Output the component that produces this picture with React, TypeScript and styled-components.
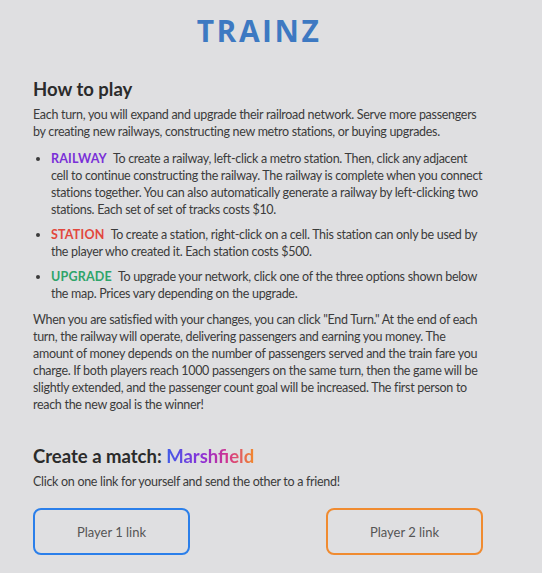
import React from 'react';
import { styled, createGlobalStyle } from 'styled-components';

const GlobalStyle = createGlobalStyle`
  html, body {
    margin: 0;
    padding: 0;
    background: #dfdfe1;
  }
  body {
    font-family: Lato, 'Noto Sans', sans-serif;
    color: #3b3b3b;
  }
`;

const RULES = [
  {
    tag: 'RAILWAY',
    color: '#7a2fd8',
    text: 'To create a railway, left-click a metro station. Then, click any adjacent cell to continue constructing the railway. The railway is complete when you connect stations together. You can also automatically generate a railway by left-clicking two stations. Each set of set of tracks costs $10.',
  },
  {
    tag: 'STATION',
    color: '#e2473d',
    text: 'To create a station, right-click on a cell. This station can only be used by the player who created it. Each station costs $500.',
  },
  {
    tag: 'UPGRADE',
    color: '#2ea46a',
    text: 'To upgrade your network, click one of the three options shown below the map. Prices vary depending on the upgrade.',
  },
];

function App() {
  return (
    <Page>
      <GlobalStyle />
      <Container>
        <Logo>TRAINZ</Logo>
        <Section>
          <Heading>How to play</Heading>
          <Text>
            Each turn, you will expand and upgrade their railroad network. Serve more passengers by creating new
            railways, constructing new metro stations, or buying upgrades.
          </Text>
          <RuleList>
            {RULES.map((rule) => (
              <Rule key={rule.tag}>
                <Tag $color={rule.color}>{rule.tag}</Tag>
                {rule.text}
              </Rule>
            ))}
          </RuleList>
          <Text>
            When you are satisfied with your changes, you can click "End Turn." At the end of each turn, the railway
            will operate, delivering passengers and earning you money. The amount of money depends on the number of
            passengers served and the train fare you charge. If both players reach 1000 passengers on the same turn,
            then the game will be slightly extended, and the passenger count goal will be increased. The first person
            to reach the new goal is the winner!
          </Text>
        </Section>
        <Section $top={31}>
          <Heading>
            Create a match: <MatchName>Marshfield</MatchName>
          </Heading>
          <Text>Click on one link for yourself and send the other to a friend!</Text>
          <LinkRow>
            <LinkButton $border="#2b7fea">Player 1 link</LinkButton>
            <LinkButton $border="#f08b30">Player 2 link</LinkButton>
          </LinkRow>
        </Section>
      </Container>
    </Page>
  );
}

export default App;

const Page = styled.div`
  width: 542px;
  height: 573px;
  padding: 0 0 0 33px;
  box-sizing: border-box;
  overflow: hidden;
`;

const Container = styled.div`
  width: 452px;
  display: flex;
  flex-direction: column;
`;

const Logo = styled.h1`
  margin: 13px 0 0;
  text-align: center;
  font-family: 'Open Sans', sans-serif;
  font-size: 30px;
  line-height: 36px;
  font-weight: 700;
  letter-spacing: 2.5px;
  color: #3d79c2;
`;

const Section = styled.div<{ $top?: number }>`
  margin-top: ${({ $top }) => $top ?? 28}px;
  display: flex;
  flex-direction: column;
`;

const Heading = styled.h2`
  margin: 0 0 5px;
  font-size: 18.5px;
  line-height: 24px;
  font-weight: 700;
  color: #2b2b2b;
`;

const Text = styled.p`
  margin: 0;
  font-size: 12.5px;
  line-height: 17px;
  letter-spacing: -0.3px;
`;

const RuleList = styled.ul`
  margin: 10px 0 9px;
  padding-left: 18px;
  display: flex;
  flex-direction: column;
  gap: 8px;
`;

const Rule = styled.li`
  font-size: 12.5px;
  line-height: 17px;
  letter-spacing: -0.3px;
`;

const Tag = styled.span<{ $color: string }>`
  font-weight: 700;
  letter-spacing: 0.2px;
  color: ${({ $color }) => $color};
  margin-right: 6px;
`;

const MatchName = styled.span`
  background: linear-gradient(90deg, #3f5de8, #8a2fd8 40%, #d2348f 70%, #f28a2c);
  -webkit-background-clip: text;
  background-clip: text;
  color: transparent;
`;

const LinkRow = styled.div`
  width: 450px;
  margin-top: 18px;
  display: flex;
  justify-content: space-between;
`;

const LinkButton = styled.button<{ $border: string }>`
  width: 157px;
  height: 47px;
  border: 2px solid ${({ $border }) => $border};
  border-radius: 8px;
  background: transparent;
  font-family: inherit;
  font-size: 13px;
  color: #555;
`;
